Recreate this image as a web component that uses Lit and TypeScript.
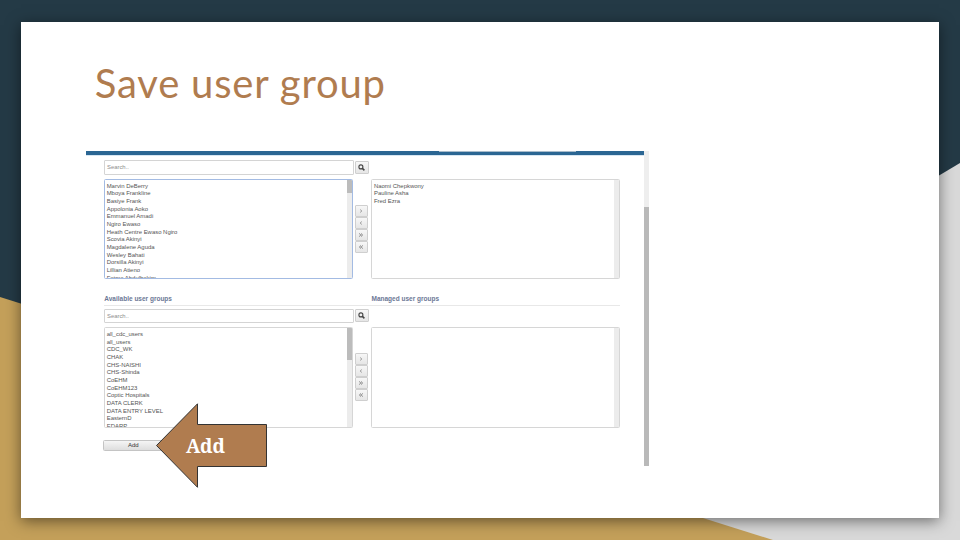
import { LitElement, html, css, svg } from "lit";
import { customElement, property } from "lit/decorators.js";

const USERS = [
  "Marvin DeBerry", "Mboya Frankline", "Basiye Frank", "Appolonia Aoko",
  "Emmanuel Amadi", "Ngiro Ewaso", "Heath Centre Ewaso Ngiro", "Scovia Akinyi",
  "Magdalene Aguda", "Wesley Bahati", "Dorsilla Akinyi", "Lillian Atieno",
  "Fatma Abdulhakim",
];
const MEMBERS = ["Naomi Chepkwony", "Pauline Asha", "Fred Ezra"];
const GROUPS = [
  "all_cdc_users", "all_users", "CDC_WK", "CHAK", "CHS-NAISHI", "CHS-Shinda",
  "CoEHM", "CoEHM123", "Coptic Hospitals", "DATA CLERK", "DATA ENTRY LEVEL",
  "EasternD", "EDARP",
];

@customElement("option-list")
class OptionList extends LitElement {
  @property({ attribute: false }) items: string[] = [];
  @property({ type: Number }) thumb = 0;

  static styles = css`
    :host {
      display: flex;
      justify-content: space-between;
      box-sizing: border-box;
      height: 100.5px;
      border: 1.4px solid #d6d6d6;
      border-radius: 1.5px;
      overflow: hidden;
      background: #fff;
    }
    :host([focused]) { border-color: #a3bbe3; }
    .items {
      padding: 2.9px 0 0 1.7px;
      font-size: 5.95px;
      line-height: 7.66px;
      color: #555;
      white-space: nowrap;
    }
    .track { width: 5.5px; background: #ececec; flex: none; }
    .thumb { background: #bcbcbc; }
  `;

  render() {
    return html`
      <div class="items">${this.items.map((t) => html`<div>${t}</div>`)}</div>
      <div class="track"><div class="thumb" style="height:${this.thumb}px"></div></div>
    `;
  }
}

@customElement("transfer-panel")
class TransferPanel extends LitElement {
  @property({ attribute: false }) available: string[] = [];
  @property({ attribute: false }) selected: string[] = [];
  @property({ type: Number }) thumb = 0;
  @property({ type: Boolean }) active = false;

  static styles = css`
    :host { display: block; }
    .search { display: flex; gap: 1px; align-items: center; height: 14.5px; }
    .field {
      box-sizing: border-box;
      width: 250px;
      height: 14.5px;
      border: 1.2px solid #d4d4d4;
      border-radius: 1px;
      padding-left: 2px;
      font-size: 5.9px;
      line-height: 13.6px;
      color: #8d8d8d;
    }
    .btn {
      box-sizing: border-box;
      display: flex;
      align-items: center;
      justify-content: center;
      border: 1px solid #cfcfcf;
      border-radius: 1px;
      background: linear-gradient(#f7f7f7, #e6e6e6);
    }
    .find { width: 14px; height: 13px; }
    .row {
      display: grid;
      grid-template-columns: 249.3px 13px 1fr;
      column-gap: 1.7px;
      margin-top: 4px;
    }
    .row option-list:last-child { margin-left: 1.6px; }
    .moves { display: flex; flex-direction: column; padding-top: 26px; }
    .move { width: 13px; height: 12px; }
    svg { display: block; }
  `;

  render() {
    const arrows = [
      "M2.2 1.6L3.8 3L2.2 4.4",
      "M3.8 1.6L2.2 3L3.8 4.4",
      "M1.2 1.5L2.8 3L1.2 4.5M3 1.5L4.6 3L3 4.5",
      "M3 1.5L1.4 3L3 4.5M4.8 1.5L3.2 3L4.8 4.5",
    ];
    return html`
      <div class="search">
        <div class="field">Search..</div>
        <div class="btn find">
          <svg width="7" height="7" viewBox="0 0 7 7" fill="none" stroke="#444">
            <circle cx="2.9" cy="2.9" r="2" stroke-width="1.1" />
            <path d="M4.4 4.4L6.4 6.4" stroke-width="1.5" />
          </svg>
        </div>
      </div>
      <div class="row">
        <option-list .items=${this.available} .thumb=${this.thumb} ?focused=${this.active}></option-list>
        <div class="moves">
          ${arrows.map((d, i) => html`
            <div class="btn move">
              <svg width="6" height="6" viewBox="0 0 6 6" fill="none" stroke="#808080"
                stroke-width=${i < 2 ? 0.8 : 1}>${svg`<path d=${d} />`}</svg>
            </div>`)}
        </div>
        <option-list .items=${this.selected}></option-list>
      </div>
    `;
  }
}

@customElement("app-root")
class AppRoot extends LitElement {
  static styles = css`
    :host {
      display: block;
      position: relative;
      width: 960px;
      height: 540px;
      overflow: hidden;
      background: #d9d9d9;
      font-family: "Liberation Sans", Arial, sans-serif;
    }
    .backdrop { position: absolute; inset: 0; display: block; }
    .slide {
      position: relative;
      box-sizing: border-box;
      width: 917.4px;
      height: 496.6px;
      margin: 21.6px 0 0 21.3px;
      padding: 36.4px 0 0 64.5px;
      background: #fff;
      box-shadow: 0 3px 14px rgba(0, 0, 0, 0.5);
    }
    h1 {
      margin: 0 0 0 9px;
      height: 93px;
      font: 400 40px/50px Lato, sans-serif;
      letter-spacing: 0.8px;
      color: #b07c4f;
      white-space: nowrap;
    }
    .window { display: flex; width: 563px; height: 315.5px; }
    .page { flex: 1; }
    .bar {
      height: 4.4px;
      background: #2b6693;
      border-bottom: 1px solid #d7e6f2;
    }
    .tab { height: 0.9px; width: 137px; margin-left: 353px; background: #a9bccb; }
    .content { padding: 4px 23.5px 0 18.2px; }
    .titles {
      display: grid;
      grid-template-columns: 267.2px 1fr;
      height: 13px;
      box-sizing: border-box;
      margin: 13.3px 0 3px;
      padding: 1.7px 0 0 0.3px;
      border-bottom: 1px solid #e8e8e8;
      font-size: 6.5px;
      line-height: 9px;
      font-weight: 700;
      color: #6c7896;
      white-space: nowrap;
    }
    .add {
      box-sizing: border-box;
      width: 61px;
      height: 11px;
      margin: 12.3px 0 0 -1.2px;
      border: 1px solid #c4c4c4;
      border-radius: 1.5px;
      background: linear-gradient(#f5f5f5, #dedede);
      font-size: 6px;
      line-height: 9px;
      text-align: center;
      color: #333;
    }
    .scroll { width: 5px; background: #eee; }
    .scroll-thumb { height: 259.5px; margin-top: 56px; background: #b9b9b9; }
    .callout { position: absolute; left: 155px; top: 402px; display: block; }
    .callout text { font: 700 20px "Noto Serif", "Liberation Serif", serif; fill: #fff; }
  `;

  render() {
    return html`
      <svg class="backdrop" width="960" height="540">
        <path d="M0 0H960V163L600 378L0 400Z" fill="#243a46" />
        <path d="M0 297L773 540H0Z" fill="#c4a05a" />
      </svg>
      <main class="slide">
        <h1>Save user group</h1>
        <section class="window">
          <div class="page">
            <div class="bar"><div class="tab"></div></div>
            <div class="content">
              <transfer-panel .available=${USERS} .selected=${MEMBERS} .thumb=${13} active></transfer-panel>
              <div class="titles"><span>Available user groups</span><span>Managed user groups</span></div>
              <transfer-panel .available=${GROUPS} .thumb=${31.5}></transfer-panel>
              <div class="add">Add</div>
            </div>
          </div>
          <div class="scroll"><div class="scroll-thumb"></div></div>
        </section>
      </main>
      <svg class="callout" width="114" height="88">
        <path d="M1.5 43.5L42.5 1.8V22.5H111.5V64.5H42.5V85.3Z" fill="#b07c4f" stroke="#333" stroke-width="1" />
        <text x="31" y="51" textLength="39" lengthAdjust="spacingAndGlyphs">Add</text>
      </svg>
    `;
  }
}
